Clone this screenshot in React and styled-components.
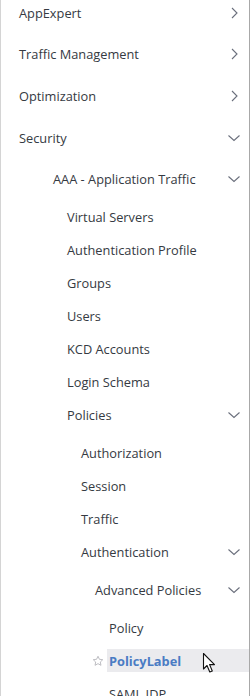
import React from 'react';
import styled, { createGlobalStyle } from 'styled-components';

const Global = createGlobalStyle`
  html, body { margin: 0; padding: 0; background: #fff; }
  body { font-family: "Open Sans", "Noto Sans", sans-serif; overflow: hidden; }
`;

const Panel = styled.nav`
  width: 250px;
  height: 696px;
  box-sizing: border-box;
  border-left: 1px solid #d4d4d4;
  border-right: 1px solid #a8a8a8;
  overflow: hidden;
  background: #fff;
`;

const List = styled.div`
  margin-top: -8px;
`;

const Children = styled.div`
  padding-top: ${p => (p.$top ? 4 : 5)}px;
`;

const Row = styled.div`
  position: relative;
  display: flex;
  align-items: center;
  height: ${p => p.$h}px;
  padding-left: ${p => p.$indent}px;
  padding-right: 8px;
  font-size: 12.8px;
  color: #353a42;
  white-space: nowrap;
  cursor: default;
`;

const Label = styled.span`
  flex: 1;
  ${p => p.$active && `
    font-weight: 700;
    color: #4a7cc4;
  `}
`;

const Highlight = styled.div`
  display: flex;
  align-items: center;
  flex: 1;
  height: 23px;
  margin-left: -2px;
  padding-left: 2px;
  background: #ebebee;
  margin-right: -8px;
  position: relative;
`;

const Star = styled.svg`
  position: absolute;
  left: ${p => p.$left}px;
  top: 50%;
  transform: translateY(-50%);
`;

const Cursor = styled.svg`
  position: absolute;
  left: 95px;
  top: 3px;
`;

const Chevron = ({ open }) => (
  <svg width="14" height="14" viewBox="0 0 14 14" style={{ flexShrink: 0 }}>
    {open ? (
      <path d="M1.5 4.5 L7 9.5 L12.5 4.5" fill="none" stroke="#6a6f7c" strokeWidth="1.1" />
    ) : (
      <path d="M5 2 L10 7 L5 12" fill="none" stroke="#6a6f7c" strokeWidth="1.1" />
    )}
  </svg>
);

const items = [
  { label: 'AppExpert', lvl: 0, h: 41, chev: 'right' },
  { label: 'Traffic Management', lvl: 0, h: 42, chev: 'right' },
  { label: 'Optimization', lvl: 0, h: 42, chev: 'right' },
  { label: 'Security', lvl: 0, h: 41, chev: 'down', gap: 4 },
  { label: 'AAA - Application Traffic', lvl: 1, h: 33, chev: 'down', gap: 5 },
  { label: 'Virtual Servers', lvl: 2, h: 33 },
  { label: 'Authentication Profile', lvl: 2, h: 33 },
  { label: 'Groups', lvl: 2, h: 33 },
  { label: 'Users', lvl: 2, h: 33 },
  { label: 'KCD Accounts', lvl: 2, h: 33 },
  { label: 'Login Schema', lvl: 2, h: 33 },
  { label: 'Policies', lvl: 2, h: 33, chev: 'down', gap: 5 },
  { label: 'Authorization', lvl: 3, h: 33 },
  { label: 'Session', lvl: 3, h: 33 },
  { label: 'Traffic', lvl: 3, h: 33 },
  { label: 'Authentication', lvl: 3, h: 33, chev: 'down', gap: 5 },
  { label: 'Advanced Policies', lvl: 4, h: 33, chev: 'down', gap: 5 },
  { label: 'Policy', lvl: 5, h: 33 },
  { label: 'PolicyLabel', lvl: 5, h: 33, active: true },
  { label: 'SAML IDP', lvl: 5, h: 33 },
];

const indents = [18, 52, 66, 80, 94, 108];

export default function App() {
  return (
    <>
      <Global />
      <Panel>
        <List>
          {items.map((it, i) => (
            <React.Fragment key={i}>
              <Row $h={it.h} $indent={indents[it.lvl]}>
                {it.active ? (
                  <>
                    <Star $left={91} width="12" height="12" viewBox="0 0 24 24">
                      <path d="M12 2.5l2.9 6.1 6.6.8-4.9 4.6 1.3 6.6L12 17.3l-5.9 3.3 1.3-6.6-4.9-4.6 6.6-.8z" fill="none" stroke="#b5b5bb" strokeWidth="1.8" strokeLinejoin="round" />
                    </Star>
                    <Highlight>
                      <Label $active>{it.label}</Label>
                      <Cursor width="14" height="22" viewBox="0 0 14 22">
                        <path d="M1.5 1.5 L1.5 17 L5 13.5 L7.8 20 L10.3 19 L7.6 12.6 L12.5 12.6 Z" fill="#fff" stroke="#111" strokeWidth="1.1" strokeLinejoin="round" />
                      </Cursor>
                    </Highlight>
                  </>
                ) : (
                  <Label>{it.label}</Label>
                )}
                {it.chev && <Chevron open={it.chev === 'down'} />}
              </Row>
              {it.gap && <Children $top={it.gap === 4} />}
            </React.Fragment>
          ))}
        </List>
      </Panel>
    </>
  );
}
